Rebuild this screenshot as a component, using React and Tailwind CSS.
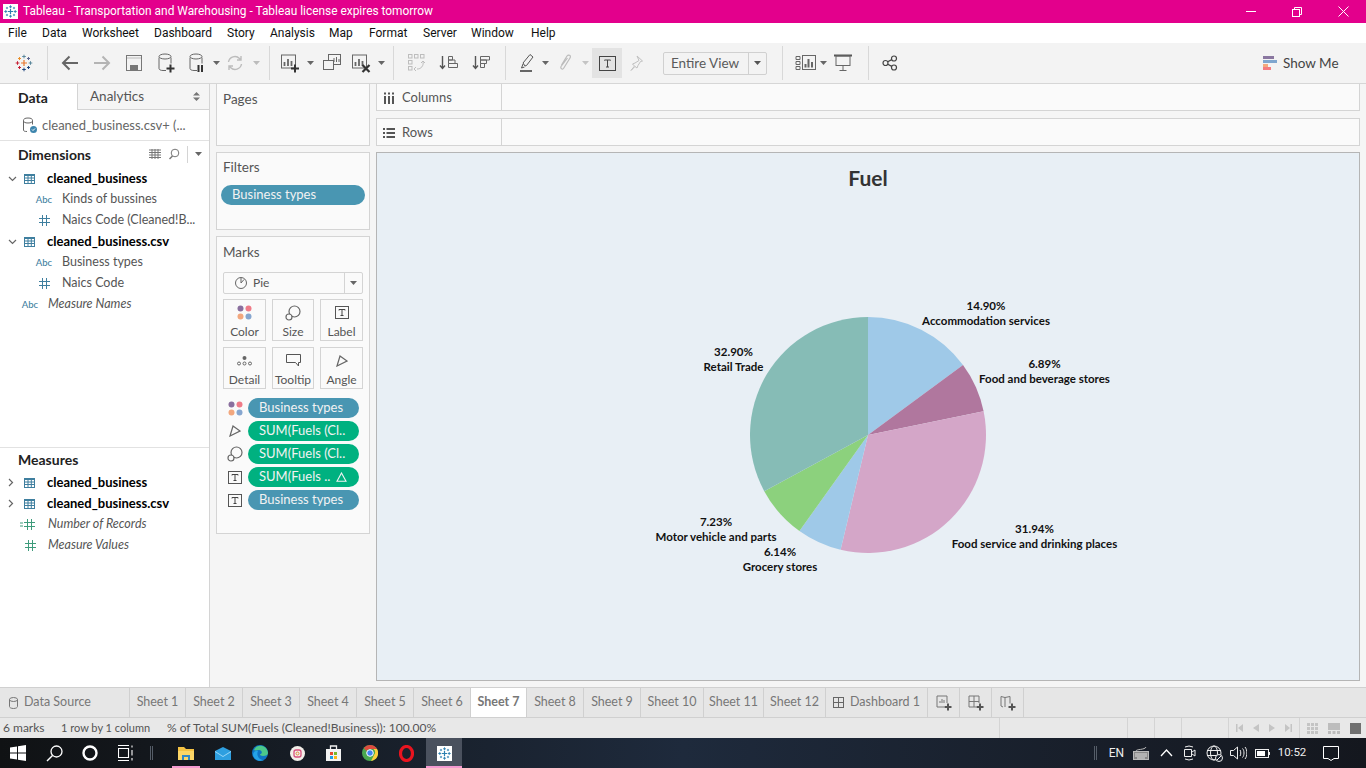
import React from "react";

const Svg = ({ w = 22, h = 22, vb, children, className = "" }) => (
  <svg width={w} height={h} viewBox={vb || `0 0 ${w} ${h}`} fill="none" stroke="#666" strokeWidth="1" className={"shrink-0 " + className}>{children}</svg>
);
const Caret = ({ c = "#666", w = 7 }) => (
  <svg width={w} height="4" viewBox="0 0 7 4" className="shrink-0"><path d="M0 0h7L3.5 4z" fill={c} /></svg>
);
const Plus = ({ x, y, s = 5, c = "#333", sw = 2 }) => <path d={`M${x - s} ${y}h${s * 2}M${x} ${y - s}v${s * 2}`} stroke={c} strokeWidth={sw} />;
const Cross = ({ x, y, s, c, sw = 1 }) => <path d={`M${x - s} ${y}h${s * 2}M${x} ${y - s}v${s * 2}`} stroke={c} strokeWidth={sw} />;

const TableauLogo = () => (
  <Svg w={18} h={18}>
    <Cross x={9} y={9} s={3} c="#e8762c" sw={1.2} />
    <Cross x={9} y={2.500} s={1.800} c="#5b879b" />
    <Cross x={9} y={15.500} s={1.800} c="#1f447e" />
    <Cross x={2.500} y={9} s={1.800} c="#c72035" />
    <Cross x={15.500} y={9} s={1.800} c="#5b879b" />
    <Cross x={4.500} y={4.500} s={1.500} c="#eb912b" />
    <Cross x={13.500} y={4.500} s={1.500} c="#5b6591" />
    <Cross x={4.500} y={13.500} s={1.500} c="#c72035" />
    <Cross x={13.500} y={13.500} s={1.500} c="#1f447e" />
  </Svg>
);
const SnowBox = ({ size = 15 }) => (
  <svg width={size} height={size} viewBox="0 0 15 15" className="shrink-0">
    <rect width="15" height="15" fill="#fff" />
    <Cross x={7.5} y={7.5} s={2.5} c="#2c7fb0" sw={1.2} />
    <Cross x={7.5} y={2.8} s={1.5} c="#2c7fb0" sw={0.9} />
    <Cross x={7.5} y={12.2} s={1.5} c="#2c7fb0" sw={0.9} />
    <Cross x={2.8} y={7.5} s={1.5} c="#2c7fb0" sw={0.9} />
    <Cross x={12.2} y={7.5} s={1.5} c="#2c7fb0" sw={0.9} />
    <Cross x={4} y={4} s={1.1} c="#2c7fb0" sw={0.8} />
    <Cross x={11} y={4} s={1.1} c="#2c7fb0" sw={0.8} />
    <Cross x={4} y={11} s={1.1} c="#2c7fb0" sw={0.8} />
    <Cross x={11} y={11} s={1.1} c="#2c7fb0" sw={0.8} />
  </svg>
);

const Cyl = ({ c = "#666" }) => (
  <g stroke={c}>
    <path d="M3 5.5v11c0 1 1.500 2 4 2h3M15 5.500v6" />
    <ellipse cx="9" cy="4.500" rx="6" ry="2.500" />
  </g>
);

const Sep = ({ cls }) => <div className={"w-px h-[34px] bg-[#d8d8d8] shrink-0 " + cls} />;
const Tool = ({ cls, children }) => <div className={"h-full flex items-center justify-center shrink-0 " + cls}>{children}</div>;

const Toolbar = () => (
  <div className="h-[41px] bg-[#f3f3f3] border-b border-[#d6d6d6] flex items-center shrink-0">
    <Tool cls="w-[47px]"><TableauLogo /></Tool>
    <Sep cls="" />
    <Tool cls="w-[32px] ml-[6px]"><Svg w={18} h={16}><path d="M17 8H2M8.500 1.500 2 8l6.500 6.500" stroke="#666" strokeWidth="2" /></Svg></Tool>
    <Tool cls="w-[32px]"><Svg w={18} h={16}><path d="M1 8h15M9.500 1.500 16 8l-6.500 6.500" stroke="#b4b4b4" strokeWidth="2" /></Svg></Tool>
    <Tool cls="w-[32px]"><Svg w={16} h={16}><rect x=".5" y=".5" width="15" height="15" stroke="#777" /><path d="M1 3h14" stroke="#bbb" /><rect x="4" y="10" width="8" height="5.500" fill="#777" stroke="none" /></Svg></Tool>
    <Tool cls="w-[32px]"><Svg w={20} h={22}><Cyl /><Plus x={14.500} y={16.500} s={4} /></Svg></Tool>
    <Tool cls="w-[30px]"><Svg w={20} h={22}><Cyl /><path d="M11.500 13v7M15 13v7" stroke="#333" strokeWidth="2" /></Svg></Tool>
    <Tool cls="w-[8px]"><Caret /></Tool>
    <Tool cls="w-[30px]"><Svg w={18} h={18}><path d="M2.500 8a6.500 6.500 0 0 1 11-3.500L15 6M15.500 10a6.500 6.500 0 0 1-11 3.500L3 12M15 2v4h-4M3 16v-4h4" stroke="#bcbcbc" strokeWidth="1.400" /></Svg></Tool>
    <Tool cls="w-[12px]"><Caret c="#bcbcbc" /></Tool>
    <Sep cls="ml-[7px]" />
    <Tool cls="w-[20px] ml-[10px]"><Svg w={20} h={20}><rect x="1.500" y="2" width="14" height="13" stroke="#666" /><path d="M4.500 13V9M8 13V6M11.500 13V8" strokeWidth="1.800" /><Plus x={15} y={15.500} s={4} /></Svg></Tool>
    <Tool cls="w-[12px] ml-[4px]"><Caret /></Tool>
    <Tool cls="w-[26px] ml-[3px]"><Svg w={20} h={20}><rect x="6.500" y="1.500" width="12" height="10" /><rect x="1.500" y="7.500" width="10" height="9" fill="#f3f3f3" /><path d="M12 9V5M14.500 9V4M17 9V6" /></Svg></Tool>
    <Tool cls="w-[26px] ml-[3px]"><Svg w={20} h={20}><rect x="1.500" y="2" width="14" height="13" /><path d="M4.500 13V9M8 13V6M11.500 13V8" strokeWidth="1.800" /><path d="M11.500 12l7 7M18.500 12l-7 7" stroke="#333" strokeWidth="2.200" /></Svg></Tool>
    <Tool cls="w-[12px] ml-[1px]"><Caret /></Tool>
    <Sep cls="ml-[6px]" />
    <Tool cls="w-[22px] ml-[12px]"><Svg w={20} h={20}><g stroke="#bdbdbd"><rect x="1.500" y="1.500" width="3.500" height="3.500" /><rect x="7.500" y="1.500" width="3.500" height="3.500" /><rect x="13.500" y="1.500" width="3.500" height="3.500" /><rect x="1.500" y="7.500" width="3.500" height="3.500" /><rect x="1.500" y="13.500" width="3.500" height="3.500" /><path d="M16 8c1 5-2 8-6 8M9 14l-2 2 2 2M14 10l2-2 2 2" /></g></Svg></Tool>
    <Tool cls="w-[22px] ml-[10px]"><Svg w={20} h={20}><path d="M3.500 3v12M1 12.500l2.500 3 2.500-3" stroke="#555" strokeWidth="1.400" /><path d="M9.500 3.500h4v3.500h-4zM9.500 7h6.500v3.500H9.500zM9.500 10.500h9v4h-9z" /></Svg></Tool>
    <Tool cls="w-[22px] ml-[11px]"><Svg w={20} h={20}><path d="M3.500 3v12M1 12.500l2.500 3 2.500-3" stroke="#555" strokeWidth="1.400" /><path d="M8.500 3.500h9v3.500h-9zM8.500 7h6v3.500h-6zM8.500 10.500h4v4h-4z" /></Svg></Tool>
    <Sep cls="ml-[12px]" />
    <Tool cls="w-[20px] ml-[12px]"><Svg w={16} h={20}><path d="M5 13 3 10l7-8.500 3 2.500-6.500 8.500zM3 11l-1.500 4 3-1" stroke="#555" /><path d="M0 18h12" stroke="#666" strokeWidth="2" /></Svg></Tool>
    <Tool cls="w-[14px]"><Caret /></Tool>
    <Tool cls="w-[20px] ml-[3px]"><Svg w={14} h={20}><path d="M3.500 12 9 3c1.500-2 4.500-.5 3 2l-6.500 10.500c-1 1.500-3.500 0-2.500-2L9.500 5" stroke="#bcbcbc" strokeWidth="1.200" /></Svg></Tool>
    <Tool cls="w-[14px] ml-[3px]"><Caret c="#c4c4c4" /></Tool>
    <Tool cls="w-[30px] h-[30px]! bg-[#e3e3e3]"><Svg w={17} h={15}><rect x=".5" y=".5" width="16" height="14" stroke="#444" /><path d="M5.500 4.500v-.5h6v.5M8.500 4v7M7 11h3" stroke="#444" /></Svg></Tool>
    <Tool cls="w-[28px]"><Svg w={16} h={16}><path d="M9 1l5.500 5-2 .5-2.500 4-1 2.500-2-1.500-4 4 3.500-4.500-2-2 2.500-1 4-2.500z" stroke="#c0c0c0" /></Svg></Tool>
    <div className="ml-[13px] w-[104px] h-[23px] border border-[#d0d0d0] rounded-[2px] flex items-center shrink-0">
      <span className="flex-1 pl-[7px] text-[13.500px] text-[#5a5a5a] whitespace-nowrap">Entire View</span>
      <div className="w-[18px] h-full border-l border-[#d0d0d0] flex items-center justify-center"><Caret c="#555" /></div>
    </div>
    <Sep cls="ml-[15px]" />
    <Tool cls="w-[24px] ml-[11px]"><Svg w={22} h={16}><path d="M1 1.500h4v3H1zM1 6.500h4v3H1zM1 11.500h4v3H1z" /><rect x="7.500" y=".5" width="13" height="14" /><path d="M10.500 12.500V9M13.500 12.500V4M17 12.500V7" strokeWidth="2" /></Svg></Tool>
    <Tool cls="w-[10px]"><Caret /></Tool>
    <Tool cls="w-[22px] ml-[4px]"><Svg w={18} h={18}><path d="M0 1.500h18" stroke="#555" strokeWidth="2" /><rect x="2" y="2" width="14" height="9.500" /><path d="M9 11.500v5M5.500 16.500h7" /></Svg></Tool>
    <Sep cls="ml-[14px]" />
    <Tool cls="w-[20px] ml-[11px]"><Svg w={16} h={16}><circle cx="3.500" cy="8" r="2.500" stroke="#444" strokeWidth="1.200" /><circle cx="12" cy="3.500" r="2.500" stroke="#444" strokeWidth="1.200" /><circle cx="12" cy="12.500" r="2.500" stroke="#444" strokeWidth="1.200" /><path d="M5.700 6.800 9.800 4.600M5.700 9.200l4.100 2.200" stroke="#444" strokeWidth="1.200" /></Svg></Tool>
    <div className="ml-auto w-[103px] flex items-center gap-[6px] shrink-0">
      <svg width="14" height="14" viewBox="0 0 14 14" className="shrink-0"><rect y="0" width="11" height="3" fill="#8a77a0" /><rect y="4" width="14" height="3" fill="#7fa6cf" /><rect y="8" width="5" height="3" fill="#f3a97e" /><rect y="11" width="8" height="3" fill="#f47c80" /></svg>
      <span className="text-[13.500px] text-[#444] whitespace-nowrap">Show Me</span>
    </div>
  </div>
);

const Abc = () => <span className="text-[9.500px] text-[#3f7f9f] leading-none font-medium">Abc</span>;
const Hash = ({ c = "#3f7f9f" }) => <Svg w={11} h={11}><path d="M3.500 0v11M7.500 0v11M0 3.500h11M0 7.500h11" stroke={c} /></Svg>;
const TableI = () => <Svg w={11} h={11}><rect x=".5" y="1.500" width="10" height="9" stroke="#3f7f9f" /><path d="M0 2h11" stroke="#3f7f9f" strokeWidth="2" /><path d="M.5 5h10M.5 7.500h10M4 3v7M7.300 3v7" stroke="#3f7f9f" /></Svg>;
const Chev = ({ down }) => down
  ? <Svg w={9} h={6}><path d="M1 1l3.500 3.500L8 1" stroke="#666" strokeWidth="1.200" /></Svg>
  : <Svg w={6} h={9}><path d="M1 1l3.500 3.500L1 8" stroke="#666" strokeWidth="1.200" /></Svg>;

const Group = ({ name, down }) => (
  <div className="h-[21px] flex items-center">
    <div className="w-[24px] pl-[8px] flex items-center">{<Chev down={down} />}</div>
    <TableI />
    <span className="ml-[12px] text-[13px] font-bold text-black whitespace-nowrap">{name}</span>
  </div>
);
const Field = ({ icon, name, cls = "pl-[36px]", italic }) => (
  <div className={"h-[21px] flex items-center text-[12.500px] text-[#555] whitespace-nowrap " + cls}>
    <div className="w-[26px] flex items-center justify-center -ml-[5px] mr-[5px]">{icon}</div>
    <span className={italic ? "italic" : ""}>{name}</span>
  </div>
);

const LeftPanel = () => (
  <div className="w-[210px] bg-white border-r border-[#d4d4d4] flex flex-col shrink-0">
    <div className="h-[26px] flex shrink-0">
      <div className="w-[77px] pl-[18px] flex items-center text-[14px] font-bold text-[#222]">Data</div>
      <div className="flex-1 pl-[12px] pr-[9px] flex items-center justify-between bg-[#f5f5f5] border-l border-b border-[#d4d4d4] text-[13.500px] text-[#555]">
        <span>Analytics</span>
        <svg width="7" height="9" viewBox="0 0 7 9"><path d="M0 3.500 3.500 0 7 3.500zM0 5.500 3.500 9 7 5.500z" fill="#777" /></svg>
      </div>
    </div>
    <div className="h-[31px] pt-[1px] border-b border-[#e2e2e2] flex items-center pl-[22px] gap-[4px] shrink-0">
      <Svg w={16} h={17}><path d="M1.500 3.500v9.500c0 1 1 1.500 3.500 1.500M10.500 3.500v4" stroke="#666" /><ellipse cx="6" cy="3.500" rx="4.500" ry="2.500" /><circle cx="11.500" cy="12.500" r="3.500" fill="#3d85ad" stroke="none" /><path d="M10 12.500l1 1 2-2" stroke="#fff" /></Svg>
      <span className="text-[13px] text-[#666] whitespace-nowrap">cleaned_business.csv+ (...</span>
    </div>
    <div className="h-[306px] shrink-0">
      <div className="h-[26px] flex items-center pl-[18px] pr-[7px]">
        <span className="text-[14px] font-bold text-[#222] flex-1">Dimensions</span>
        <Svg w={12} h={10}><path d="M0 1h12M0 3.500h12M0 6h12M0 8.500h12M3 0v10M6 0v10M9 0v10" stroke="#777" /></Svg>
        <Svg w={12} h={12} className="ml-[7px]"><circle cx="7" cy="5" r="3.800" stroke="#777" /><path d="M4.500 8 1.500 11" stroke="#777" strokeWidth="1.500" /></Svg>
        <div className="w-px h-[17px] bg-[#d4d4d4] ml-[7px] mr-[7px]" />
        <Caret c="#666" />
      </div>
      <div className="pt-[1px]">
        <Group name="cleaned_business" down />
        <Field icon={<Abc />} name="Kinds of bussines" />
        <Field icon={<Hash />} name="Naics Code (Cleaned!B..." />
        <Group name="cleaned_business.csv" down />
        <Field icon={<Abc />} name="Business types" />
        <Field icon={<Hash />} name="Naics Code" />
        <Field icon={<Abc />} name="Measure Names" cls="pl-[22px]" italic />
      </div>
    </div>
    <div className="border-t border-[#e2e2e2] flex-1">
      <div className="h-[24px] pb-[2px] flex items-center pl-[18px] text-[14px] font-bold text-[#222]">Measures</div>
      <Group name="cleaned_business" />
      <Group name="cleaned_business.csv" />
      <Field icon={<Svg w={20} h={11}><path d="M0 4h3M0 7h3" stroke="#3e9b7b" /><path d="M7.500 0v11M11.500 0v11M4 3.500h11M4 7.500h11" stroke="#3e9b7b" /></Svg>} name="Number of Records" cls="pl-[22px]" italic />
      <Field icon={<Hash c="#3e9b7b" />} name="Measure Values" cls="pl-[22px]" italic />
    </div>
  </div>
);

const Pill = ({ children, green, cls = "", right }) => (
  <div className={"h-[20px] rounded-full flex items-center text-[13px] text-[#f2f2f2] whitespace-nowrap " + (green ? "bg-[#00b180] " : "bg-[#4996b2] ") + cls}>
    <span className="flex-1">{children}</span>{right}
  </div>
);
const Dots = () => (
  <svg width="15" height="15" viewBox="0 0 15 15" className="shrink-0"><circle cx="3.500" cy="3.500" r="3" fill="#8a6f9e" /><circle cx="11.500" cy="3.500" r="3" fill="#ef7b88" /><circle cx="3.500" cy="11.500" r="3" fill="#f2a77e" /><circle cx="11.500" cy="11.500" r="3" fill="#86a6cf" /></svg>
);
const SizeI = () => <Svg w={16} h={16}><circle cx="9.500" cy="6.500" r="5.500" stroke="#666" strokeWidth="1.200" /><circle cx="4" cy="12" r="3" fill="#fafafa" stroke="#666" strokeWidth="1.200" /></Svg>;
const LabelI = () => <Svg w={14} h={13}><rect x=".5" y=".5" width="13" height="12" stroke="#555" /><path d="M4 4.500V3.500h6v1M7 3.500v6M5.500 9.500h3" stroke="#444" /></Svg>;
const AngleI = () => <Svg w={12} h={12}><path d="M1 11 4 1l7 5z" stroke="#666" strokeWidth="1.200" /></Svg>;

const MarkBtn = ({ cls, icon, label }) => (
  <div className={"h-[42px] border border-[#d4d4d4] flex flex-col items-center shrink-0 " + cls}>
    <div className="h-[25px] flex items-center justify-center">{icon}</div>
    <span className="text-[12px] text-[#555] leading-[14px]">{label}</span>
  </div>
);
const PillRow = ({ icon, children }) => (
  <div className="flex items-center h-[20px]">
    <div className="w-[25px] flex justify-center pr-[3px] pl-[2px] shrink-0">{icon}</div>
    <div className="flex-1">{children}</div>
  </div>
);

const Cards = () => (
  <div className="w-[166px] pl-[6px] pr-[6px] flex flex-col shrink-0 gap-[6px]">
    <div className="h-[62px] border border-[#d4d4d4] border-t-0 bg-[#fafafa] px-[6px] pt-[5px] text-[13.500px] text-[#555] shrink-0">Pages</div>
    <div className="h-[78px] border border-[#d4d4d4] bg-[#fafafa] shrink-0">
      <div className="h-[32px] pl-[6px] pt-[4px] text-[13.500px] text-[#555]">Filters</div>
      <div className="px-[4px]"><Pill cls="pl-[11px]">Business types</Pill></div>
    </div>
    <div className="h-[298px] border border-[#d4d4d4] bg-[#fafafa] px-[6px] shrink-0 flex flex-col">
      <div className="h-[35px] pt-[5px] text-[13.500px] text-[#555]">Marks</div>
      <div className="h-[22px] w-[140px] border border-[#d4d4d4] rounded-[2px] flex items-center text-[12px] text-[#555]">
        <div className="flex-1 flex items-center pl-[11px] gap-[6px]">
          <Svg w={12} h={12}><circle cx="6" cy="6" r="5.500" stroke="#666" /><path d="M6 1v5L9 2.500" stroke="#666" /></Svg>
          <span>Pie</span>
        </div>
        <div className="w-[18px] h-full border-l border-[#d4d4d4] flex items-center justify-center"><Caret c="#666" /></div>
      </div>
      <div className="flex gap-[6px] mt-[5px]">
        <MarkBtn cls="w-[43px]" icon={<Dots />} label="Color" />
        <MarkBtn cls="w-[42px]" icon={<SizeI />} label="Size" />
        <MarkBtn cls="w-[43px]" icon={<LabelI />} label="Label" />
      </div>
      <div className="flex gap-[6px] mt-[6px]">
        <MarkBtn cls="w-[43px]" label="Detail" icon={<Svg w={15} h={10}><circle cx="7.500" cy="2" r="2" fill="#666" stroke="none" /><circle cx="2" cy="7.500" r="1.500" /><circle cx="7.500" cy="7.500" r="1.500" /><circle cx="13" cy="7.500" r="1.500" /></Svg>} />
        <MarkBtn cls="w-[42px]" label="Tooltip" icon={<Svg w={15} h={13}><path d="M.5.500h14v8h-2v3.500l-3-3.500H.5z" stroke="#555" /></Svg>} />
        <MarkBtn cls="w-[43px]" label="Angle" icon={<AngleI />} />
      </div>
      <div className="flex flex-col gap-[3px] mt-[9px]">
        <PillRow icon={<Dots />}><Pill cls="pl-[11px] w-[111px]">Business types</Pill></PillRow>
        <PillRow icon={<AngleI />}><Pill green cls="pl-[11px] w-[111px]">SUM(Fuels (Cl..</Pill></PillRow>
        <PillRow icon={<SizeI />}><Pill green cls="pl-[11px] w-[111px]">SUM(Fuels (Cl..</Pill></PillRow>
        <PillRow icon={<LabelI />}>
          <Pill green cls="pl-[11px] pr-[12px] w-[111px]" right={<svg width="11" height="10" viewBox="0 0 11 10" className="shrink-0"><path d="M5.500 1 10 9.300H1z" fill="none" stroke="#f2f2f2" strokeWidth="1.100" /></svg>}>SUM(Fuels ..</Pill>
        </PillRow>
        <PillRow icon={<LabelI />}><Pill cls="pl-[11px] w-[111px]">Business types</Pill></PillRow>
      </div>
    </div>
  </div>
);

const Shelf = ({ icon, label }) => (
  <div className="h-[27px] border border-[#d4d4d4] border-t-0 bg-[#fafafa] flex shrink-0">
    <div className="w-[125px] border-r border-[#d4d4d4] flex items-center pl-[6px] pt-[1px] gap-[7px] text-[13px] text-[#555]">{icon}<span>{label}</span></div>
  </div>
);

const slices = [
  [14.90, "#9fc9e8"], [6.89, "#b0779e"], [31.94, "#d4a6c8"], [6.14, "#9fc9e8"], [7.23, "#8cd17d"], [32.90, "#86bcb6"],
];
const labels = [
  [986, 305, "14.90%", "Accommodation services"],
  [1044.5, 363, "6.89%", "Food and beverage stores"],
  [1034.5, 528, "31.94%", "Food service and drinking places"],
  [780, 551, "6.14%", "Grocery stores"],
  [716, 521, "7.23%", "Motor vehicle and parts"],
  [733.5, 351, "32.90%", "Retail Trade"],
];
const Pie = () => {
  const cx = 868, cy = 435, r = 118;
  const total = slices.reduce((a, s) => a + s[0], 0);
  let acc = 0;
  const pt = (v) => {
    const a = (v / total) * 2 * Math.PI;
    return [cx + r * Math.sin(a), cy - r * Math.cos(a)];
  };
  return (
    <svg viewBox="377 203 982 477" className="flex-1 w-full block">
      {slices.map(([v, c], i) => {
        const [x0, y0] = pt(acc);
        acc += v;
        const [x1, y1] = pt(acc);
        return <path key={i} d={`M${cx} ${cy}L${x0} ${y0}A${r} ${r} 0 ${v / total > 0.5 ? 1 : 0} 1 ${x1} ${y1}Z`} fill={c} />;
      })}
      {labels.map(([x, y, a, b]) => (
        <g key={b} textAnchor="middle" dominantBaseline="central" className="text-[11.500px] font-bold" fill="#111">
          <text x={x} y={y}>{a}</text>
          <text x={x} y={y + 15}>{b}</text>
        </g>
      ))}
    </svg>
  );
};

const Canvas = () => (
  <div className="flex-1 flex flex-col pr-[6px] gap-[7px] min-w-0">
    <Shelf label="Columns" icon={<Svg w={12} h={12}><path d="M2 4v8M6 4v8M10 4v8" stroke="#555" strokeWidth="2" /><path d="M2 .5v2M6 .5v2M10 .5v2" stroke="#555" strokeWidth="2" /></Svg>} />
    <div className="border-t border-[#d4d4d4] -mb-[1px]"><Shelf label="Rows" icon={<Svg w={12} h={10}><path d="M0 1h2M3.500 1H12M0 5h2M3.500 5H12M0 9h2M3.500 9H12" stroke="#555" strokeWidth="2" /></Svg>} /></div>
    <div className="h-[529px] border border-[#b5b5b5] bg-[#e8eff5] flex flex-col shrink-0">
      <div className="h-[50px] flex items-center justify-center text-[21px] font-bold text-[#333] shrink-0">Fuel</div>
      <Pie />
    </div>
  </div>
);

const tabs = [
  ["Sheet 1", "w-[56px]"], ["Sheet 2", "w-[57px]"], ["Sheet 3", "w-[57px]"], ["Sheet 4", "w-[57px]"], ["Sheet 5", "w-[57px]"], ["Sheet 6", "w-[57px]"],
  ["Sheet 7", "w-[56px] bg-white font-bold text-[#555]"], ["Sheet 8", "w-[57px]"], ["Sheet 9", "w-[57px]"], ["Sheet 10", "w-[63px]"], ["Sheet 11", "w-[60px]"], ["Sheet 12", "w-[62px]"],
];
const Tab = ({ cls, children }) => <div className={"h-full flex items-center justify-center border-r border-[#d0d0d0] text-[12.500px] text-[#777] whitespace-nowrap shrink-0 " + cls}>{children}</div>;
const TabBar = () => (
  <div className="h-[31px] bg-[#e6e6e6] border-t border-b border-[#d0d0d0] flex shrink-0">
    <Tab cls="w-[130px] justify-start! pl-[9px] gap-[6px]"><Svg w={9} h={12}><path d="M.5 2.500v7c0 1 1.500 2 4 2s4-1 4-2v-7" stroke="#777" /><ellipse cx="4.500" cy="2.500" rx="4" ry="2" stroke="#777" /></Svg><span>Data Source</span></Tab>
    {tabs.map(([t, c]) => <Tab key={t} cls={c}>{t}</Tab>)}
    <Tab cls="w-[102px] gap-[6px]"><Svg w={11} h={11}><rect x=".5" y=".5" width="10" height="10" stroke="#666" /><path d="M5.500 0v11M0 5.500h11" stroke="#666" /></Svg><span>Dashboard 1</span></Tab>
    <Tab cls="w-[32px]"><Svg w={16} h={16}><path d="M8 12H1V1h10v7" stroke="#777" /><path d="M4 8V6M6 8V4M8 8V5" stroke="#777" /><Plus x={12} y={12} s={3.500} c="#555" /></Svg></Tab>
    <Tab cls="w-[32px]"><Svg w={16} h={16}><path d="M8 12H1V1h10v7M6 1v11M1 6.500h10" stroke="#777" /><Plus x={12} y={12} s={3.500} c="#555" /></Svg></Tab>
    <Tab cls="w-[32px]"><Svg w={16} h={16}><path d="M1 1.500l4 1 5-1v7M3 12l-2-1V1.500M5 2.500V12" stroke="#777" /><Plus x={12} y={12} s={3.500} c="#555" /></Svg></Tab>
  </div>
);

const V = ({ cls }) => <div className={"w-px h-full bg-[#d4d4d4] shrink-0 " + cls} />;
const StatusBar = () => (
  <div className="h-[20px] bg-[#e8e8e8] flex items-center text-[12px] text-[#555] whitespace-nowrap shrink-0">
    <span className="w-[61px] pl-[3px]">6 marks</span>
    <span className="w-[106px] text-[11px]">1 row by 1 column</span>
    <span className="w-[725px]">% of Total SUM(Fuels (Cleaned!Business)): 100.00%</span>
    <V cls="ml-[107px]" />
    <V cls="ml-[127px]" />
    <V cls="ml-[26px]" />
    <V cls="ml-[26px]" />
    <V cls="ml-[46px]" />
    <div className="w-[70px] flex items-center justify-around px-[2px]">
      <svg width="7" height="8" viewBox="0 0 7 8"><path d="M0 0h1.500v8H0zM7 0v8L2 4z" fill="#c4c4c4" /></svg>
      <svg width="6" height="8" viewBox="0 0 6 8"><path d="M6 0v8L0 4z" fill="#c4c4c4" /></svg>
      <svg width="6" height="8" viewBox="0 0 6 8"><path d="M0 0v8l6-4z" fill="#c4c4c4" /></svg>
      <svg width="7" height="8" viewBox="0 0 7 8"><path d="M5.500 0H7v8H5.500zM0 0v8l5-4z" fill="#c4c4c4" /></svg>
    </div>
    <V cls="" />
    <div className="flex-1 flex items-center justify-around pl-[2px]">
      <svg width="11" height="11" viewBox="0 0 11 11"><path d="M0 0h3v3H0zM4 0h3v3H4zM8 0h3v3H8zM0 4h3v3H0zM4 4h3v3H4zM8 4h3v3H8zM0 8h3v3H0zM4 8h3v3H4zM8 8h3v3H8z" fill="#c4c4c4" /></svg>
      <svg width="12" height="11" viewBox="0 0 12 11"><path d="M0 0h12v7H0zM0 8h3v3H0zM4.500 8h3v3h-3zM9 8h3v3H9z" fill="#bdbdbd" /></svg>
      <svg width="11" height="11" viewBox="0 0 11 11"><path d="M0 0h11v11H0z" fill="#707070" /></svg>
    </div>
  </div>
);

const TB = ({ cls, children }) => <div className={"h-full flex items-center justify-center shrink-0 " + cls}>{children}</div>;
const Taskbar = () => (
  <div className="h-[30px] bg-linear-to-r from-[#101214] via-[#1e2a3c] to-[#14171e] flex items-center text-white shrink-0 font-['Roboto',sans-serif]">
    <TB cls="w-[36px]"><svg width="16" height="16" viewBox="0 0 16 16"><path d="M0 2.500 7 1.500V7.500H0zM8 1.300 16 0v7.500H8zM0 8.500h7v6L0 13.500zM8 8.500h8V16L8 14.700z" fill="#fff" /></svg></TB>
    <TB cls="w-[36px]"><svg width="17" height="17" viewBox="0 0 17 17" fill="none" stroke="#fff"><circle cx="10.500" cy="6.500" r="5.500" strokeWidth="1.300" /><path d="M6.500 10.500 1 16" strokeWidth="1.500" /></svg></TB>
    <TB cls="w-[36px]"><svg width="16" height="16" viewBox="0 0 16 16" fill="none"><circle cx="8" cy="8" r="6.500" stroke="#fff" strokeWidth="2.400" /></svg></TB>
    <TB cls="w-[35px]"><svg width="16" height="16" viewBox="0 0 16 16" fill="none" stroke="#fff"><path d="M0 .5h11M0 15.500h11M.5 3.500h10v9H.5zM14 .5v2M14 5v5.500M14 13v2.500" strokeWidth="1.100" /></svg></TB>
    <div className="w-[3px] h-[14px] border-x border-[#555d68] ml-[7px] mr-[15px] shrink-0" />
    <TB cls="w-[36px] relative"><svg width="16" height="14" viewBox="0 0 16 14"><path d="M0 1h6l2 2h8v11H0z" fill="#f5c344" /><path d="M0 5h16v9H0z" fill="#fcd667" /><path d="M4 9h8v5h-2v-3H6v3H4z" fill="#3088c8" /></svg><div className="absolute bottom-0 left-[4px] right-[4px] h-[2px] bg-[#f49ad0]" /></TB>
    <TB cls="w-[36px] ml-[1px]"><svg width="16" height="13" viewBox="0 0 16 13"><path d="M0 4 8 0l8 4v9H0z" fill="#2e9fe0" /><path d="M0 4l8 5 8-5v1L8 10 0 5z" fill="#9bd7f7" /></svg></TB>
    <TB cls="w-[36px] ml-[1px]"><svg width="16" height="16" viewBox="0 0 16 16"><circle cx="8" cy="8" r="8" fill="#0f74c4" /><path d="M2 5C4-1 15-1 16 8c0 2-2 3-5 3-2 0-3-1-3-2 3 0 2-4-1-4-2 0-4 1-5 0z" fill="#4cc98a" /><path d="M6 6c-2 4 1 9 6 9-4 2-10 0-11-5 0-3 3-5 5-4z" fill="#24a2e8" /></svg></TB>
    <TB cls="w-[36px] ml-[1px]"><svg width="15" height="15" viewBox="0 0 15 15"><circle cx="7.500" cy="7.500" r="7.500" fill="#f2efe9" /><rect x="4" y="4" width="7" height="7" rx="2" fill="none" stroke="#d8507e" strokeWidth="1.300" /><circle cx="7.500" cy="7.500" r="1.500" fill="none" stroke="#e0883e" /></svg></TB>
    <TB cls="w-[36px]"><svg width="15" height="16" viewBox="0 0 15 16"><path d="M0 4h15v12H0z" fill="#f2f2f2" /><path d="M4.500 4V1h6v3" fill="none" stroke="#f2f2f2" strokeWidth="1.300" /><path d="M4 7h3v3H4z" fill="#e74a2e" /><path d="M8 7h3v3H8z" fill="#7ab829" /><path d="M4 11h3v3H4z" fill="#1d9ce4" /><path d="M8 11h3v3H8z" fill="#fdb813" /></svg></TB>
    <TB cls="w-[36px] ml-[1px]"><svg width="16" height="16" viewBox="0 0 16 16"><circle cx="8" cy="8" r="8" fill="#4aa84f" /><path d="M8 0a8 8 0 0 1 7 4H8a4 4 0 0 0-3.500 2L1.800 3A8 8 0 0 1 8 0z" fill="#dd4b3e" /><path d="M15 4a8 8 0 0 1-6 12l3-6a4 4 0 0 0-.5-6z" fill="#fcce3d" /><circle cx="8" cy="8" r="3.300" fill="#3e82f1" stroke="#fff" /></svg></TB>
    <TB cls="w-[36px]"><svg width="15" height="17" viewBox="0 0 15 17"><ellipse cx="7.500" cy="8.500" rx="6" ry="7" fill="none" stroke="#e8141f" strokeWidth="3.200" /></svg></TB>
    <TB cls="w-[36px] ml-[2px] bg-[#4a515e] relative"><SnowBox /><div className="absolute bottom-0 left-0 right-0 h-[2px] bg-[#f49ad0]" /></TB>
    <div className="w-[3px] h-[14px] border-x border-[#555d68] ml-[632px] shrink-0" />
    <span className="w-[17px] ml-[11px] text-[12px] text-[#eee] text-center">EN</span>
    <TB cls="w-[24px] ml-[4px]"><svg width="16" height="14" viewBox="0 0 16 14" fill="none" stroke="#bbb"><rect x=".5" y="5.500" width="15" height="8" fill="#888" /><path d="M3 5c0-2 9-1 10-4" /><path d="M2 8h12M2 10h12M4 12h8" stroke="#ddd" /></svg></TB>
    <TB cls="w-[24px] ml-[1px]"><svg width="13" height="8" viewBox="0 0 13 8" fill="none" stroke="#fff"><path d="M1 7l5.500-6L12 7" strokeWidth="1.300" /></svg></TB>
    <TB cls="w-[24px]"><svg width="12" height="16" viewBox="0 0 12 16" fill="none" stroke="#eee"><path d="M1 2q4-2 8 0M1 14q4 2 8 0M.5 4.500h7v7h-7zM8 7l3-2v6l-3-2" /></svg></TB>
    <TB cls="w-[24px]"><svg width="17" height="17" viewBox="0 0 17 17" fill="none" stroke="#eee"><circle cx="8" cy="8" r="7" /><ellipse cx="8" cy="8" rx="3.500" ry="7" /><path d="M1 5.500h14M1 10.500h14" /><circle cx="13" cy="13" r="3.500" fill="#1a202c" /><path d="M11 15l4-4" /></svg></TB>
    <TB cls="w-[24px]"><svg width="17" height="14" viewBox="0 0 17 14" fill="none" stroke="#eee"><path d="M.5 4.500h3L7.500 1v12l-4-3.500h-3z" /><path d="M10 4c1 1 1 5 0 6M12.500 2.500c2 2 2 7 0 9M15 1c2.500 3 2.500 9 0 12" /></svg></TB>
    <TB cls="w-[24px]"><svg width="15" height="9" viewBox="0 0 15 9"><rect x=".5" y=".5" width="13" height="8" fill="none" stroke="#eee" /><rect x="2" y="2" width="8" height="5" fill="#fff" /><rect x="14" y="3" width="1" height="3" fill="#eee" /></svg></TB>
    <span className="w-[40px] -ml-[2px] text-[11.500px] text-[#eee] text-center">10:52</span>
    <TB cls="w-[16px] ml-[11px]"><svg width="16" height="16" viewBox="0 0 16 16" fill="none" stroke="#fff"><path d="M.5 1.500h15v12h-4.500l-3 2-3-2h-4.500z" /></svg></TB>
  </div>
);

const menu = [
  ["File", "w-[34px]"], ["Data", "w-[40px]"], ["Worksheet", "w-[72px]"], ["Dashboard", "w-[73px]"], ["Story", "w-[43px]"], ["Analysis", "w-[59px]"],
  ["Map", "w-[40px]"], ["Format", "w-[54px]"], ["Server", "w-[48px]"], ["Window", "w-[60px]"], ["Help", "w-[40px]"],
];

export default function App() {
  return (
    <div className="w-[1366px] h-[768px] overflow-hidden flex flex-col font-['Lato','Open_Sans',sans-serif] bg-[#f5f5f5]">
      <div className="h-[23px] bg-[#e3008c] flex items-center shrink-0 text-white font-['Roboto',sans-serif]">
        <div className="w-[23px] pl-[3px] flex items-center"><SnowBox /></div>
        <span className="text-[11.900px] whitespace-nowrap flex-1">Tableau - Transportation and Warehousing - Tableau license expires tomorrow</span>
        <div className="w-[46px] flex justify-center"><svg width="10" height="1"><rect width="10" height="1" fill="#fff" /></svg></div>
        <div className="w-[46px] flex justify-center"><svg width="10" height="10" viewBox="0 0 10 10" fill="none" stroke="#fff"><path d="M2.500 2.500V.5h7v7h-2" /><rect x=".5" y="2.500" width="7" height="7" /></svg></div>
        <div className="w-[46px] flex justify-center"><svg width="11" height="11" viewBox="0 0 11 11" fill="none" stroke="#fff"><path d="M.5.500l10 10M10.500.500l-10 10" /></svg></div>
      </div>
      <div className="h-[20px] bg-white flex items-center pl-[8px] shrink-0 font-['Roboto',sans-serif]">
        {menu.map(([m, c]) => <span key={m} className={"text-[12px] text-[#111] " + c}>{m}</span>)}
      </div>
      <Toolbar />
      <div className="h-[603px] flex shrink-0">
        <LeftPanel />
        <Cards />
        <Canvas />
      </div>
      <TabBar />
      <StatusBar />
      <Taskbar />
    </div>
  );
}
